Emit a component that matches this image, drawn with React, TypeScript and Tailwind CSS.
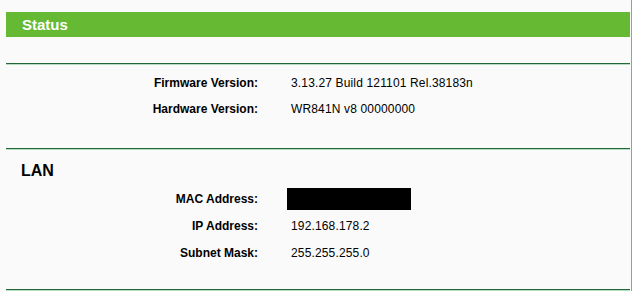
const FONT = { fontFamily: '"Liberation Sans", Arial, sans-serif' };

type Row = { label: string; value?: string; masked?: boolean };

const VERSION_ROWS: Row[] = [
  { label: "Firmware Version:", value: "3.13.27 Build 121101 Rel.38183n" },
  { label: "Hardware Version:", value: "WR841N v8 00000000" },
];

const LAN_ROWS: Row[] = [
  { label: "MAC Address:", masked: true },
  { label: "IP Address:", value: "192.168.178.2" },
  { label: "Subnet Mask:", value: "255.255.255.0" },
];

function Divider() {
  return (
    <div className="flex flex-col">
      <div className="h-px bg-[#23673a]" />
      <div className="h-px bg-[#b5dbc1]" />
    </div>
  );
}

function InfoRows({ rows, rowH }: { rows: Row[]; rowH: "short" | "tall" }) {
  const h = rowH === "tall" ? "h-[27px]" : "h-[26px]";
  return (
    <div className="grid grid-cols-[252px_1fr] gap-x-[29px]">
      {rows.map((row) => (
        <div key={row.label} className="contents">
          <div className={`${h} flex items-center justify-end text-[12px] font-bold text-black`}>
            {row.label}
          </div>
          <div className={`${h} flex items-center text-[12px] tracking-[0.15px] text-black`}>
            {row.masked ? (
              <div className="w-[124px] h-[22px] bg-black" />
            ) : (
              <span className="pl-[4px]">{row.value}</span>
            )}
          </div>
        </div>
      ))}
    </div>
  );
}

export default function App() {
  return (
    <div
      className="w-[632px] h-[291px] bg-[#fafafa] border-r border-[#9c9c9c] pl-[6px] pr-px pt-[12px] overflow-hidden"
      style={FONT}
    >
      {/* header bar */}
      <div className="h-[25px] bg-[#66b933] flex items-center pl-[16px]">
        <h1 className="text-[15px] font-bold text-white leading-none">Status</h1>
      </div>

      <div className="mt-[26px]">
        <Divider />
      </div>

      {/* versions */}
      <div className="pt-[5px]">
        <InfoRows rows={VERSION_ROWS} rowH="short" />
      </div>

      <div className="mt-[26px]">
        <Divider />
      </div>

      {/* LAN */}
      <div className="mt-[11px] h-[20px] flex items-center pl-[15px]">
        <h2 className="text-[16px] font-bold text-black leading-none">LAN</h2>
      </div>
      <div className="mt-[4px]">
        <InfoRows rows={LAN_ROWS} rowH="tall" />
      </div>

      <div className="mt-[23px]">
        <Divider />
      </div>
    </div>
  );
}
